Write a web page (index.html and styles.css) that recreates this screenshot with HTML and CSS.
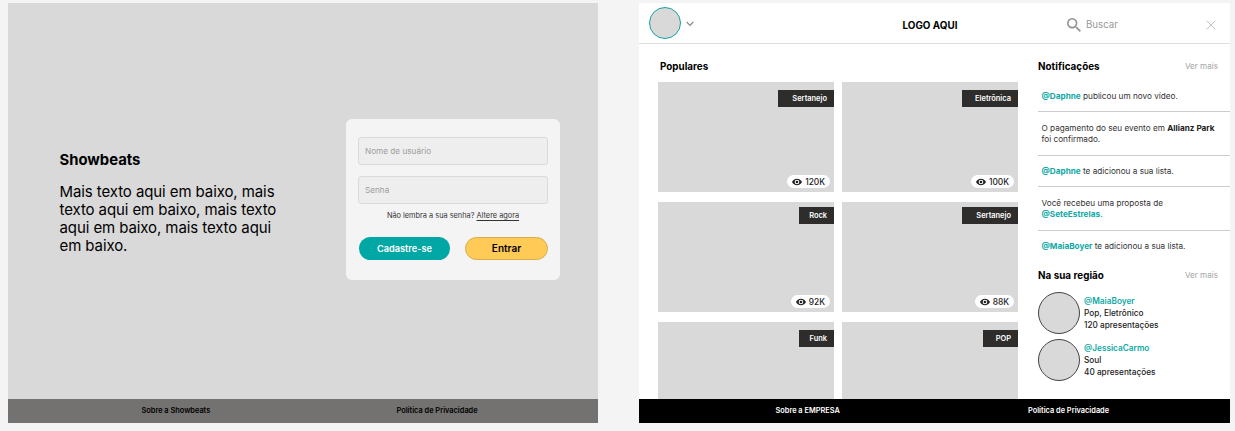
FILE: index.html
```html
<!DOCTYPE html>
<html lang="pt-BR">
<head>
<meta charset="utf-8">
<title>Showbeats</title>
<link rel="stylesheet" href="styles.css">
</head>
<body>
<svg width="0" height="0" class="defs">
  <symbol id="eye" viewBox="0 0 24 24"><path fill-rule="evenodd" d="M12 4C6.500 4 2 7.500 0 12c2 4.500 6.500 8 12 8s10-3.500 12-8c-2-4.500-6.500-8-12-8zm0 13.600a5.600 5.600 0 1 1 0-11.200 5.600 5.600 0 0 1 0 11.200zm0-8.800a3.200 3.200 0 1 0 0 6.400 3.200 3.200 0 0 0 0-6.400z"/></symbol>
</svg>
<main class="screens">
  <section class="screen login">
    <div class="login-body">
      <div class="intro">
        <h1 class="intro-title">Showbeats</h1>
        <p class="intro-text">Mais texto aqui em baixo, mais<br>texto aqui em baixo, mais texto<br>aqui em baixo, mais texto aqui<br>em baixo.</p>
      </div>
      <form class="login-card">
        <div class="field">Nome de usuário</div>
        <div class="field">Senha</div>
        <p class="forgot">Não lembra a sua senha? <span class="forgot-link">Altere agora</span></p>
        <div class="actions">
          <div class="btn btn-signup">Cadastre-se</div>
          <div class="btn btn-enter">Entrar</div>
        </div>
      </form>
    </div>
    <footer class="footer footer-muted"><span class="foot-a">Sobre a Showbeats</span><span class="foot-b">Política de Privacidade</span></footer>
  </section>

  <section class="screen home">
    <header class="topbar">
      <div class="avatar-me"></div>
      <svg class="chevron" viewBox="0 0 8 6"><path d="M0.700 1 4 4.300 7.300 1"/></svg>
      <div class="logo">LOGO AQUI</div>
      <svg class="search-icon" viewBox="3 3 17.500 17.500"><path d="M15.500 14h-.79l-.28-.27A6.471 6.471 0 0 0 16 9.500 6.500 6.500 0 1 0 9.500 16c1.610 0 3.090-.59 4.230-1.570l.27.28v.79l5 4.990L20.490 19l-4.990-5zm-6 0C7.010 14 5 11.990 5 9.500S7.010 5 9.500 5 14 7.010 14 9.500 11.990 14 9.500 14z"/></svg>
      <div class="search-text">Buscar</div>
      <svg class="close" viewBox="0 0 10 10"><path d="M.7.7l8.600 8.600M9.300.7L.7 9.300"/></svg>
    </header>
    <div class="content">
      <div class="popular">
        <h2 class="heading popular-title">Populares</h2>
        <div class="grid">
          <article class="card"><span class="tag">Sertanejo</span><span class="views"><svg class="eye"><use href="#eye"/></svg>120K</span></article>
          <article class="card"><span class="tag">Eletrônica</span><span class="views"><svg class="eye"><use href="#eye"/></svg>100K</span></article>
          <article class="card card-high"><span class="tag tag-short">Rock</span><span class="views"><svg class="eye"><use href="#eye"/></svg>92K</span></article>
          <article class="card card-high"><span class="tag">Sertanejo</span><span class="views"><svg class="eye"><use href="#eye"/></svg>88K</span></article>
          <article class="card"><span class="tag tag-short">Funk</span></article>
          <article class="card"><span class="tag tag-short">POP</span></article>
        </div>
      </div>
      <aside class="side">
        <div class="side-head"><h2 class="heading">Notificações</h2><span class="more">Ver mais</span></div>
        <ul class="notes">
          <li class="note"><b class="user">@Daphne</b> publicou um novo vídeo.</li>
          <li class="note note-tall">O pagamento do seu evento em <b class="place">Allianz Park</b><br>foi confirmado.</li>
          <li class="note"><b class="user">@Daphne</b> te adicionou a sua lista.</li>
          <li class="note note-tall">Você recebeu uma proposta de<br><b class="user">@SeteEstrelas.</b></li>
          <li class="note"><b class="user">@MaiaBoyer</b> te adicionou a sua lista.</li>
        </ul>
        <div class="side-head region-head"><h2 class="heading">Na sua região</h2><span class="more">Ver mais</span></div>
        <div class="artist"><div class="avatar"></div><p class="info"><b class="artist-name">@MaiaBoyer</b><br>Pop, Eletrônico<br>120 apresentações</p></div>
        <div class="artist"><div class="avatar"></div><p class="info"><b class="artist-name">@JessicaCarmo</b><br>Soul<br>40 apresentações</p></div>
      </aside>
    </div>
    <footer class="footer footer-dark"><span class="foot-c">Sobre a EMPRESA</span><span class="foot-d">Política de Privacidade</span></footer>
  </section>
</main>
</body>
</html>
```
FILE: styles.css
```css
* { box-sizing: border-box; }
body { margin: 0; background: #f4f4f4; font-family: Inter, "Liberation Sans", sans-serif; color: #000; height: 431px; overflow: hidden; }
h1, h2, p, ul { margin: 0; padding: 0; }
ul { list-style: none; }
.defs { position: absolute; }
.screens { display: flex; gap: 41px; padding: 3px 5px 8px 8px; }
.screen { height: 420px; display: flex; flex-direction: column; overflow: hidden; }
.login { width: 590px; background: #d9d9d9; }
.home { width: 591px; background: #fff; }

.login-body { height: 396px; display: flex; justify-content: space-between; padding: 116px 38px 0 51px; }
.intro { padding: 32px 0 0 0.500px; }
.intro-title { font-size: 14.800px; line-height: 18px; font-weight: 700; }
.intro-text { margin-top: 14px; font-size: 15px; letter-spacing: -0.090px; line-height: 18.100px; white-space: nowrap; }
.login-card { width: 214px; height: 161px; background: #f4f4f4; border-radius: 6px; padding: 18px 12px 0; }
.field { height: 28px; width: 190px; margin-bottom: 11px; border: 1px solid #dadada; border-radius: 3px; background: #eee; padding-left: 6px; font-size: 8.200px; line-height: 26px; color: #9d9d9d; }
.forgot { margin-top: -5px; padding-top: 1px; text-align: center; font-size: 7.360px; line-height: 10px; color: #333; white-space: nowrap; }
.forgot-link { text-decoration: underline; text-underline-offset: 1.500px; text-decoration-thickness: 0.700px; }
.actions { display: flex; justify-content: space-between; margin-top: 16px; padding-left: 1px; }
.btn { height: 23px; border-radius: 12px; line-height: 23px; text-align: center; }
.btn-signup { width: 91px; background: #00a7a5; color: #fff; font-size: 9.200px; font-weight: 600; }
.btn-enter { width: 83px; background: #ffca55; border: 1px solid #d9ad4e; line-height: 21px; font-size: 10px; font-weight: 600; }

.footer { height: 24px; flex: none; display: flex; align-items: center; font-size: 7.380px; font-weight: 600; line-height: 24px; white-space: nowrap; }
.footer-muted { background: #737270; color: #000; }
.footer-dark { background: #000; color: #fff; }
.foot-a { width: 255px; margin-left: 133.500px; }
.foot-c { width: 252.500px; margin-left: 136.500px; }

.topbar { height: 41px; flex: none; display: flex; align-items: center; padding: 0 14px 0 10px; border-bottom: 1px solid #dedede; }
.avatar-me { width: 32px; height: 32px; border-radius: 50%; background: #d9d9d9; border: 1px solid #18a3a3; }
.chevron { width: 8px; height: 6px; margin: 2px 0 0 5px; fill: none; stroke: #888; stroke-width: 1.200; }
.logo { width: 164px; margin: 3px 0 0 208.500px; font-size: 9.900px; font-weight: 700; white-space: nowrap; }
.search-icon { width: 14px; height: 14px; margin: 3px 0 0 0.500px; fill: #929292; }
.search-text { margin: 3px 0 0 5px; font-size: 9.700px; color: #999; }
.close { width: 10px; height: 10px; margin: 3px 0 0 auto; fill: none; stroke: #bbb; stroke-width: 0.900; }

.content { height: 355px; overflow: hidden; display: flex; }
.popular { width: 379px; padding: 16px 0 0 19px; }
.heading { font-size: 9.850px; line-height: 13px; font-weight: 700; white-space: nowrap; }
.popular-title { padding-left: 2px; }
.grid { margin-top: 9px; display: grid; grid-template-columns: 176px 176px; gap: 10px 8px; }
.card { height: 110px; background: #d9d9d9; display: flex; flex-direction: column; justify-content: space-between; align-items: flex-end; padding: 8px 0 4px; }
.card-high { padding-top: 5px; }
.tag { width: 56px; height: 17px; background: #2e2d2b; color: #fff; font-size: 7.450px; line-height: 17px; font-weight: 600; text-align: right; padding-right: 7px; }
.tag-short { width: 35px; }
.views { height: 13px; margin-right: 4px; padding: 0 5px; border-radius: 7px; background: #fff; display: flex; align-items: center; gap: 3px; font-size: 8.400px; font-weight: 500; color: #222; }
.eye { width: 10px; height: 10px; fill: #222; }

.side { width: 212px; padding: 16px 0 0 20px; }
.side-head { display: flex; justify-content: space-between; padding-right: 12px; }
.side .heading { letter-spacing: 0.030px; }
.more { font-size: 8.100px; line-height: 13px; color: #a5a5a5; }
.notes { margin-top: 8px; }
.note { height: 31px; border-bottom: 1px solid #ccc; display: block; padding: 9px 0 0 3.500px; font-size: 8.200px; line-height: 12px; color: #333; white-space: nowrap; }
.note-tall { height: 44px; padding-top: 10.900px; line-height: 11.400px; }
.note:last-child { height: 28px; border: 0; }
.user { color: #10a9a5; font-weight: 700; }
.place { color: #222; font-weight: 700; }
.region-head { margin-top: 10px; }
.artist { display: flex; gap: 4px; height: 42px; margin-top: 10px; }
.artist + .artist { margin-top: 5px; }
.avatar { width: 42px; height: 42px; border-radius: 50%; background: #d9d9d9; border: 1px solid #444; }
.info { font-size: 8.250px; line-height: 12px; font-weight: 500; color: #222; padding-top: 3px; }
.artist-name { color: #10a9a5; font-weight: 600; }
```
